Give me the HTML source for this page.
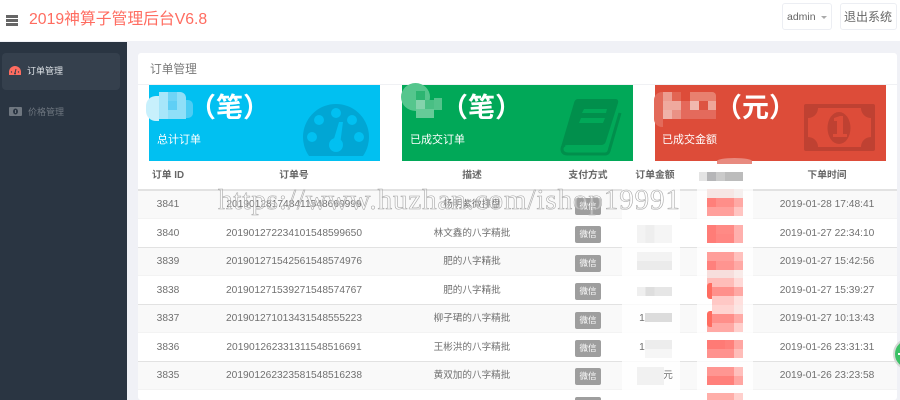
<!DOCTYPE html>
<html><head><meta charset="utf-8"><style>
*{box-sizing:border-box}
html,body{margin:0;padding:0;width:900px;height:400px;overflow:hidden}
#w{position:relative;width:900px;height:400px;overflow:hidden;background:#f0f1f6;font-family:"Liberation Sans","Noto Sans CJK SC",sans-serif;color:#676a6c}
.a{position:absolute}
.t{position:absolute;white-space:nowrap;line-height:1}
.m{position:absolute}
.badge{position:absolute;left:575px;width:26px;height:17px;background:#9e9e9e;border-radius:2px;color:#fff;font-size:8.5px;line-height:17px;text-align:center}
.row{position:absolute;left:138px;width:759px}
.cell{position:absolute;white-space:nowrap;font-size:10.2px;line-height:1;color:#707070;transform:translateX(-50%)}
.d{font-size:9.6px}
.th{position:absolute;top:171px;font-size:9.8px;font-weight:bold;color:#666;line-height:1;white-space:nowrap;transform:translateX(-50%)}
.s{position:absolute;left:707px;width:36px;height:9px}
.big{position:absolute;white-space:nowrap;line-height:1;top:95px;font-size:27px;font-weight:bold;color:#fff}
.lab{position:absolute;white-space:nowrap;line-height:1;top:135px;font-size:11px;color:#fff}
</style></head><body><div id="w">
<div class="a" style="left:0;top:0;width:900px;height:41px;background:#fff"></div>
<div class="a" style="left:6px;top:15px;width:12px;height:2.500px;background:#666"></div>
<div class="a" style="left:6px;top:19px;width:12px;height:2.500px;background:#666"></div>
<div class="a" style="left:6px;top:23px;width:12px;height:2.500px;background:#666"></div>
<div class="t" style="left:29px;top:12px;font-size:15.8px;color:#ff6c60">2019神算子管理后台V6.8</div>
<div class="a" style="left:782px;top:3px;width:50px;height:27px;background:#fff;border:1px solid #eceef3;border-radius:3px"></div>
<div class="t" style="left:787px;top:12px;font-size:10.5px;color:#666">admin</div>
<div class="a" style="left:821px;top:16px;width:0;height:0;border:3px solid transparent;border-top:3px solid #aaa"></div>
<div class="a" style="left:840px;top:3px;width:57px;height:27px;background:#fff;border:1px solid #eceef3;border-radius:3px"></div>
<div class="t" style="left:844px;top:11px;font-size:12px;color:#666">退出系统</div>

<div class="a" style="left:0;top:42px;width:127px;height:358px;background:#2a3542"></div>
<div class="a" style="left:2px;top:53px;width:118px;height:37px;background:#35404d;border-radius:4px"></div>
<svg class="a" style="left:9px;top:66px" width="12" height="10" viewBox="0 0 12 10"><path d="M0 9V6a6 6 0 0 1 12 0v3z" fill="#ff6c60"/><path d="M6 7L7 3" stroke="#35404d"/><circle cx="6" cy="7.500" r="1" fill="#35404d"/><circle cx="2.500" cy="6" r=".7" fill="#35404d"/><circle cx="9.500" cy="6" r=".7" fill="#35404d"/></svg>
<div class="t" style="left:27px;top:67px;font-size:9px;color:#dfe3e8">订单管理</div>
<svg class="a" style="left:9px;top:107px" width="13" height="9" viewBox="0 0 13 9"><rect width="13" height="9" rx="1" fill="#6f7780"/><ellipse cx="6.500" cy="4.500" rx="2.500" ry="3" fill="#2a3542"/><rect x="6" y="3" width="1" height="3" fill="#6f7780"/></svg>
<div class="t" style="left:28px;top:108px;font-size:9px;color:#6f7780">价格管理</div>

<div class="a" style="left:138px;top:53px;width:759px;height:347px;background:#fff;border-radius:3px"></div>
<div class="t" style="left:150px;top:64px;font-size:11.700px;color:#777">订单管理</div>
<div class="a" style="left:138px;top:84px;width:759px;height:1px;background:#f0f1f4"></div>

<!-- blue -->
<div class="a" style="left:149px;top:85px;width:231px;height:76px;background:#01c0f1;overflow:hidden">
<svg class="a" style="left:153px;top:19px" width="68" height="57" viewBox="0 0 68 57"><path d="M7 52A33 33 0 1 1 61 52Z" fill="#01a6d4"/><g fill="#01c0f1"><circle cx="10" cy="33" r="5"/><circle cx="17" cy="16" r="5"/><circle cx="34" cy="9" r="5"/><circle cx="50" cy="16" r="5"/><circle cx="57" cy="33" r="5"/><circle cx="34" cy="41" r="7"/><path d="M31 38L37 18H41L38 41z"/></g></svg>
</div>
<div class="m" style="left:186px;top:100px;width:7px;height:18px;background:#4dcdf4;border-radius:0 5px 5px 0"></div>
<div class="m" style="left:159px;top:92px;width:27px;height:27px;background:#8fdff8;border-radius:0 6px 0 0"></div>
<div class="m" style="left:159px;top:92px;width:9px;height:9px;background:#a7e6fa"></div>
<div class="m" style="left:168px;top:92px;width:9px;height:9px;background:#6fd4f6"></div>
<div class="m" style="left:159px;top:101px;width:9px;height:18px;background:#a7e6fa"></div>
<div class="m" style="left:168px;top:101px;width:9px;height:9px;background:#5fcff5"></div>
<div class="m" style="left:146px;top:96px;width:13px;height:25px;background:#c8f0fc;border-radius:10px 0 0 10px"></div>
<div class="big" style="left:189px">（笔）</div>
<div class="lab" style="left:157px">总计订单</div>

<!-- green -->
<div class="a" style="left:402px;top:85px;width:231px;height:76px;background:#01a858;overflow:hidden">
<svg class="a" style="left:158px;top:14px" width="64" height="58" viewBox="0 0 64 58"><path d="M18 0H55Q59 0 58 4L46 42Q45 46 41 46H8Q4 46 1 48L14 4Q15 0 18 0ZM24 10L22 14H46L47 10ZM21 19L19 24H43L45 19Z" fill="#018f4c" fill-rule="evenodd"/><path d="M60 14L49 52Q48 55 45 55H8Q2 55 2 50Q2 47 5 46" fill="none" stroke="#018f4c" stroke-width="3"/></svg>
</div>
<div class="m" style="left:401px;top:83px;width:29px;height:28px;background:#55c68d;border-radius:50%"></div>
<div class="m" style="left:416px;top:91px;width:9px;height:9px;background:#2cb571"></div>
<div class="m" style="left:416px;top:100px;width:9px;height:9px;background:#84d3ac"></div>
<div class="m" style="left:425px;top:100px;width:9px;height:9px;background:#49bf84"></div>
<div class="m" style="left:434px;top:98px;width:8px;height:12px;background:#53c38b"></div>
<div class="m" style="left:416px;top:109px;width:18px;height:9px;background:#66cb98"></div>
<div class="big" style="left:441px">（笔）</div>
<div class="lab" style="left:410px">已成交订单</div>

<!-- red -->
<div class="a" style="left:655px;top:85px;width:231px;height:76px;background:#dd4c39;overflow:hidden">
<svg class="a" style="left:149px;top:19px" width="71" height="47" viewBox="0 0 71 47"><rect width="71" height="47" rx="2" fill="#bf4132"/><path d="M14 4H57A10 10 0 0 0 67 14V33A10 10 0 0 0 57 43H14A10 10 0 0 0 4 33V14A10 10 0 0 0 14 4Z" fill="#dd4c39"/><ellipse cx="35" cy="24" rx="11.500" ry="16" fill="#bf4132"/><path d="M30 14L36 12H39V30H43V33H29V30H33V17H30Z" fill="#dd4c39"/></svg>
</div>
<div class="m" style="left:654px;top:92px;width:9px;height:35px;background:#e36a5a;border-radius:8px 0 0 8px"></div>
<div class="m" style="left:663px;top:92px;width:53px;height:27px;background:#e46a5c;border-radius:0 4px 0 0"></div>
<div class="m" style="left:663px;top:92px;width:9px;height:9px;background:#ec9c90"></div>
<div class="m" style="left:672px;top:92px;width:9px;height:9px;background:#e26553"></div>
<div class="m" style="left:681px;top:92px;width:9px;height:9px;background:#dd4c39"></div>
<div class="m" style="left:690px;top:92px;width:26px;height:9px;background:#e8806f;border-radius:0 4px 0 0"></div>
<div class="m" style="left:663px;top:101px;width:18px;height:9px;background:#efa99e"></div>
<div class="m" style="left:681px;top:101px;width:9px;height:9px;background:#e5685a"></div>
<div class="m" style="left:690px;top:101px;width:9px;height:9px;background:#f1b8ae"></div>
<div class="m" style="left:699px;top:101px;width:9px;height:9px;background:#dd5441"></div>
<div class="m" style="left:708px;top:101px;width:8px;height:9px;background:#eea699"></div>
<div class="m" style="left:663px;top:110px;width:9px;height:9px;background:#f0b2a8"></div>
<div class="m" style="left:672px;top:110px;width:9px;height:9px;background:#ea9285"></div>
<div class="big" style="left:715px">（元）</div>
<div class="lab" style="left:662px">已成交金额</div>

<!-- table -->
<div class="th" style="left:168px">订单 ID</div>
<div class="th" style="left:294px">订单号</div>
<div class="th" style="left:472px">描述</div>
<div class="th" style="left:588px">支付方式</div>
<div class="th" style="left:655px">订单金额</div>
<div class="th" style="left:827px">下单时间</div>
<div class="a" style="left:138px;top:189px;width:759px;height:2px;background:#e2e2e2"></div>

<div class="row" style="top:191px;background:#f9f9f9;border-bottom:1px solid #f3f3f3;height:28px"></div>
<div class="row" style="top:219px;height:29px;background:#fff;border-bottom:1px solid #e2e2e2"></div>
<div class="row" style="top:248px;height:28px;background:#f9f9f9;border-bottom:1px solid #f3f3f3"></div>
<div class="row" style="top:276px;height:29px;background:#fff;border-bottom:1px solid #e2e2e2"></div>
<div class="row" style="top:305px;height:28px;background:#f9f9f9;border-bottom:1px solid #f3f3f3"></div>
<div class="row" style="top:333px;height:29px;background:#fff;border-bottom:1px solid #e2e2e2"></div>
<div class="row" style="top:362px;height:28px;background:#f9f9f9;border-bottom:1px solid #f3f3f3"></div>

<div class="cell" style="left:168px;top:200px">3841</div><div class="cell" style="left:294px;top:200px">201901281748411548669999</div><div class="cell d" style="left:472px;top:200px">杨明紫微排盘</div>
<div class="cell" style="left:168px;top:229px">3840</div><div class="cell" style="left:294px;top:229px">201901272234101548599650</div><div class="cell d" style="left:472px;top:229px">林文鑫的八字精批</div>
<div class="cell" style="left:168px;top:257px">3839</div><div class="cell" style="left:294px;top:257px">201901271542561548574976</div><div class="cell d" style="left:472px;top:257px">肥的八字精批</div>
<div class="cell" style="left:168px;top:286px">3838</div><div class="cell" style="left:294px;top:286px">201901271539271548574767</div><div class="cell d" style="left:472px;top:286px">肥的八字精批</div>
<div class="cell" style="left:168px;top:314px">3837</div><div class="cell" style="left:294px;top:314px">201901271013431548555223</div><div class="cell d" style="left:472px;top:314px">柳子珺的八字精批</div>
<div class="cell" style="left:168px;top:343px">3836</div><div class="cell" style="left:294px;top:343px">201901262331311548516691</div><div class="cell d" style="left:472px;top:343px">王彬洪的八字精批</div>
<div class="cell" style="left:168px;top:371px">3835</div><div class="cell" style="left:294px;top:371px">201901262323581548516238</div><div class="cell d" style="left:472px;top:371px">黄双加的八字精批</div>

<div class="badge" style="top:198px">微信</div>
<div class="badge" style="top:226px">微信</div>
<div class="badge" style="top:255px">微信</div>
<div class="badge" style="top:283px">微信</div>
<div class="badge" style="top:312px">微信</div>
<div class="badge" style="top:340px">微信</div>
<div class="badge" style="top:368px">微信</div>
<div class="badge" style="top:397px">微信</div>

<div class="cell" style="left:827px;top:200px">2019-01-28 17:48:41</div>
<div class="cell" style="left:827px;top:229px">2019-01-27 22:34:10</div>
<div class="cell" style="left:827px;top:257px">2019-01-27 15:42:56</div>
<div class="cell" style="left:827px;top:286px">2019-01-27 15:39:27</div>
<div class="cell" style="left:827px;top:314px">2019-01-27 10:13:43</div>
<div class="cell" style="left:827px;top:343px">2019-01-26 23:31:31</div>
<div class="cell" style="left:827px;top:371px">2019-01-26 23:23:58</div>

<!-- amount mosaic -->
<div class="m" style="left:622px;top:181px;width:58px;height:219px;background:#fff;opacity:.8"></div>
<div class="cell" style="left:642px;top:314px">1</div>
<div class="cell" style="left:642px;top:343px">1</div>
<div class="cell d" style="left:668px;top:371px">元</div>
<div class="m" style="left:637px;top:225px;width:35px;height:18px;background:linear-gradient(90deg,#f3f3f3 25%,#eee 25% 50%,#f5f5f5 50%)"></div>
<div class="m" style="left:637px;top:252px;width:35px;height:9px;background:#f3f3f3"></div>
<div class="m" style="left:637px;top:261px;width:35px;height:9px;background:#ebebeb"></div>
<div class="m" style="left:637px;top:287px;width:35px;height:9px;background:linear-gradient(90deg,#efefef 25%,#dedede 25% 50%,#e6e6e6 50%)"></div>
<div class="m" style="left:645px;top:313px;width:27px;height:9px;background:#dcdcdc"></div>
<div class="m" style="left:645px;top:340px;width:27px;height:9px;background:#ededed"></div>
<div class="m" style="left:645px;top:349px;width:27px;height:9px;background:#f6f6f6"></div>
<div class="m" style="left:637px;top:367px;width:27px;height:18px;background:#f1f1f1"></div>
<!-- status mosaic -->
<div class="m" style="left:699px;top:172px;width:8px;height:9px;background:#e4e4e4"></div>
<div class="m" style="left:707px;top:172px;width:9px;height:9px;background:#b6b6b8"></div>
<div class="m" style="left:716px;top:172px;width:9px;height:9px;background:#cacaca"></div>
<div class="m" style="left:725px;top:172px;width:18px;height:9px;background:#bcbcbc"></div>
<div class="m" style="left:697px;top:181px;width:56px;height:219px;background:#fff;opacity:.75"></div>
<div class="s" style="top:189px;background:linear-gradient(90deg,#f6e6e4 75%,#f5efee 75%)"></div>
<div class="s" style="top:198px;background:linear-gradient(90deg,#ff7f7a 25%,#ff8e89 25% 75%,#ffa9a5 75%)"></div>
<div class="s" style="top:207px;background:linear-gradient(90deg,#ff9f9b 75%,#ffc4c1 75%)"></div>
<div class="s" style="top:225px;background:linear-gradient(90deg,#ff7c77 25%,#ff8a85 25% 75%,#ffb0ad 75%)"></div>
<div class="s" style="top:234px;background:linear-gradient(90deg,#ff7c77 25%,#ff8682 25% 75%,#ffb0ad 75%)"></div>
<div class="s" style="top:252px;background:linear-gradient(90deg,#ff9e9a 75%,#ffc0bd 75%)"></div>
<div class="s" style="top:261px;background:linear-gradient(90deg,#ff807c 25%,#ff9490 25% 75%,#ffa9a5 75%)"></div>
<div class="s" style="top:270px;height:8px;background:linear-gradient(90deg,#f7dedc 75%,#f9ebe9 75%)"></div>
<div class="s" style="top:278px;background:linear-gradient(90deg,#ffbdb9 75%,#ffd9d7 75%)"></div>
<div class="s" style="top:287px;background:linear-gradient(90deg,#ff908b 75%,#ffa8a4 75%)"></div>
<div class="s" style="top:296px;left:712px;width:31px;background:linear-gradient(90deg,#ffc8c5 71%,#ffe0de 71%)"></div>
<div class="s" style="top:305px;left:712px;width:31px;background:linear-gradient(90deg,#ffd4d1 71%,#fbe5e3 71%)"></div>
<div class="s" style="top:314px;background:linear-gradient(90deg,#ff8f8a 75%,#ffaaa6 75%)"></div>
<div class="s" style="top:323px;background:linear-gradient(90deg,#ffa9a5 75%,#ffcfcc 75%)"></div>
<div class="s" style="top:340px;background:linear-gradient(90deg,#ff7a75 50%,#ff807b 50% 75%,#ffa6a2 75%)"></div>
<div class="s" style="top:349px;background:linear-gradient(90deg,#ff928e 75%,#ffbdb9 75%)"></div>
<div class="s" style="top:367px;background:linear-gradient(90deg,#ff9692 75%,#ffbfbc 75%)"></div>
<div class="s" style="top:376px;background:linear-gradient(90deg,#ff7f7a 75%,#ffa5a1 75%)"></div>
<div class="s" style="top:393px;background:linear-gradient(90deg,#ffaea9 75%,#ffd0cd 75%)"></div>
<div class="m" style="left:707px;top:283px;width:5px;height:16px;background:#ff6c60;border-radius:3px 0 0 3px"></div>
<div class="m" style="left:707px;top:311px;width:5px;height:16px;background:#ff6c60;border-radius:3px 0 0 3px"></div>
<div class="m" style="left:717px;top:158px;width:35px;height:6px;background:#e88a7f;border-radius:50% 50% 0 0"></div>

<!-- watermark -->
<div class="t" style="left:218px;top:186px;font-family:'Liberation Serif',serif;font-size:29px;letter-spacing:.9px;color:rgba(255,255,255,.35);-webkit-text-stroke:.6px #a8a8a8">https://www.huzhan.com/ishop19991</div>

<!-- green circle -->
<div class="a" style="left:893px;top:338px;width:32px;height:32px;background:#3cc166;border:2px solid #d4d8d5;border-radius:50%"></div>
<div class="a" style="left:898px;top:353px;width:2px;height:2px;background:#fff"></div>
</div></body></html>
